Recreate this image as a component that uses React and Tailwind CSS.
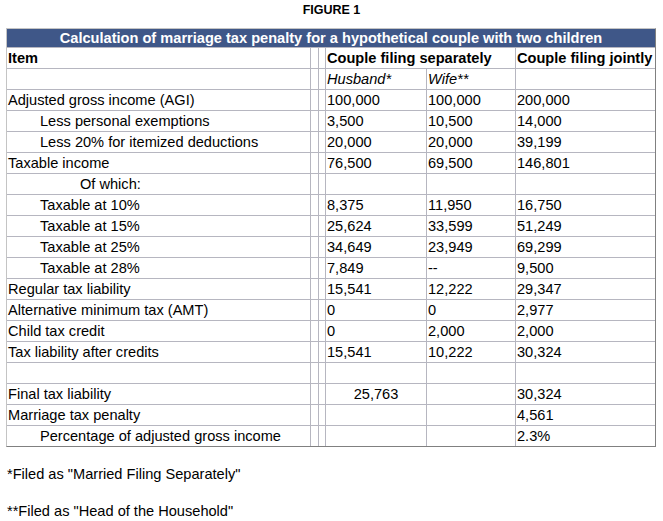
const rows = [
  { label: 'Adjusted gross income (AGI)', indent: 0, h: '100,000', w: '100,000', j: '200,000' },
  { label: 'Less personal exemptions', indent: 1, h: '3,500', w: '10,500', j: '14,000' },
  { label: 'Less 20% for itemized deductions', indent: 1, h: '20,000', w: '20,000', j: '39,199' },
  { label: 'Taxable income', indent: 0, h: '76,500', w: '69,500', j: '146,801' },
  { label: 'Of which:', indent: 2, h: '', w: '', j: '' },
  { label: 'Taxable at 10%', indent: 1, h: '8,375', w: '11,950', j: '16,750' },
  { label: 'Taxable at 15%', indent: 1, h: '25,624', w: '33,599', j: '51,249' },
  { label: 'Taxable at 25%', indent: 1, h: '34,649', w: '23,949', j: '69,299' },
  { label: 'Taxable at 28%', indent: 1, h: '7,849', w: '--', j: '9,500' },
  { label: 'Regular tax liability', indent: 0, h: '15,541', w: '12,222', j: '29,347' },
  { label: 'Alternative minimum tax (AMT)', indent: 0, h: '0', w: '0', j: '2,977' },
  { label: 'Child tax credit', indent: 0, h: '0', w: '2,000', j: '2,000' },
  { label: 'Tax liability after credits', indent: 0, h: '15,541', w: '10,222', j: '30,324' },
  { label: '', indent: 0, h: '', w: '', j: '' },
  { label: 'Final tax liability', indent: 0, h: '25,763', w: '', j: '30,324', center: true },
  { label: 'Marriage tax penalty', indent: 0, h: '', w: '', j: '4,561' },
  { label: 'Percentage of adjusted gross income', indent: 1, h: '', w: '', j: '2.3%' },
];

const indents = ['pl-px', 'pl-[33px]', 'pl-[73px]'];

function Cell({ children, className = '' }) {
  return (
    <div className={`bg-white flex items-center whitespace-nowrap overflow-hidden ${className}`}>
      {children}
    </div>
  );
}

export default function App() {
  return (
    <div className="bg-white text-black min-h-[521px] font-['Liberation_Sans',Arial,sans-serif]">
      <div className="w-[663px] h-[28px] pt-[3px] text-center font-bold text-[12.5px] leading-[15px]">
        FIGURE 1
      </div>

      <div className="ml-[6px] w-[650px] border border-t-[#c4c4c4] border-l-[#c4c4c4] border-b-[#808080] border-r-[#808080]">
        <div className="grid grid-cols-[303px_7px_6px_100px_88px_139px] grid-rows-[18px] auto-rows-[20px] gap-px bg-[#b6b6c0] text-[14.6px] leading-[17px]">
          <div className="col-span-6 bg-[#3f5788] text-white font-bold flex items-center justify-center">
            Calculation of marriage tax penalty for a hypothetical couple with two children
          </div>

          <Cell className="pl-px font-bold">Item</Cell>
          <Cell />
          <Cell />
          <Cell className="col-span-2 pl-px font-bold">Couple filing separately</Cell>
          <Cell className="pl-px font-bold">Couple filing jointly</Cell>

          <Cell />
          <Cell />
          <Cell />
          <Cell className="pl-px italic">Husband*</Cell>
          <Cell className="pl-px italic">Wife**</Cell>
          <Cell />

          {rows.map((r, i) => (
            <div key={i} className="contents">
              <Cell className={indents[r.indent]}>{r.label}</Cell>
              <Cell />
              <Cell />
              <Cell className={r.center ? 'justify-center' : 'pl-px'}>{r.h}</Cell>
              <Cell className="pl-px">{r.w}</Cell>
              <Cell className="pl-px">{r.j}</Cell>
            </div>
          ))}
        </div>
      </div>

      <div className="pl-[7px] text-[14.6px] leading-[17px]">
        <p className="mt-[19px]">*Filed as "Married Filing Separately"</p>
        <p className="mt-[20px]">**Filed as "Head of the Household"</p>
      </div>
    </div>
  );
}
